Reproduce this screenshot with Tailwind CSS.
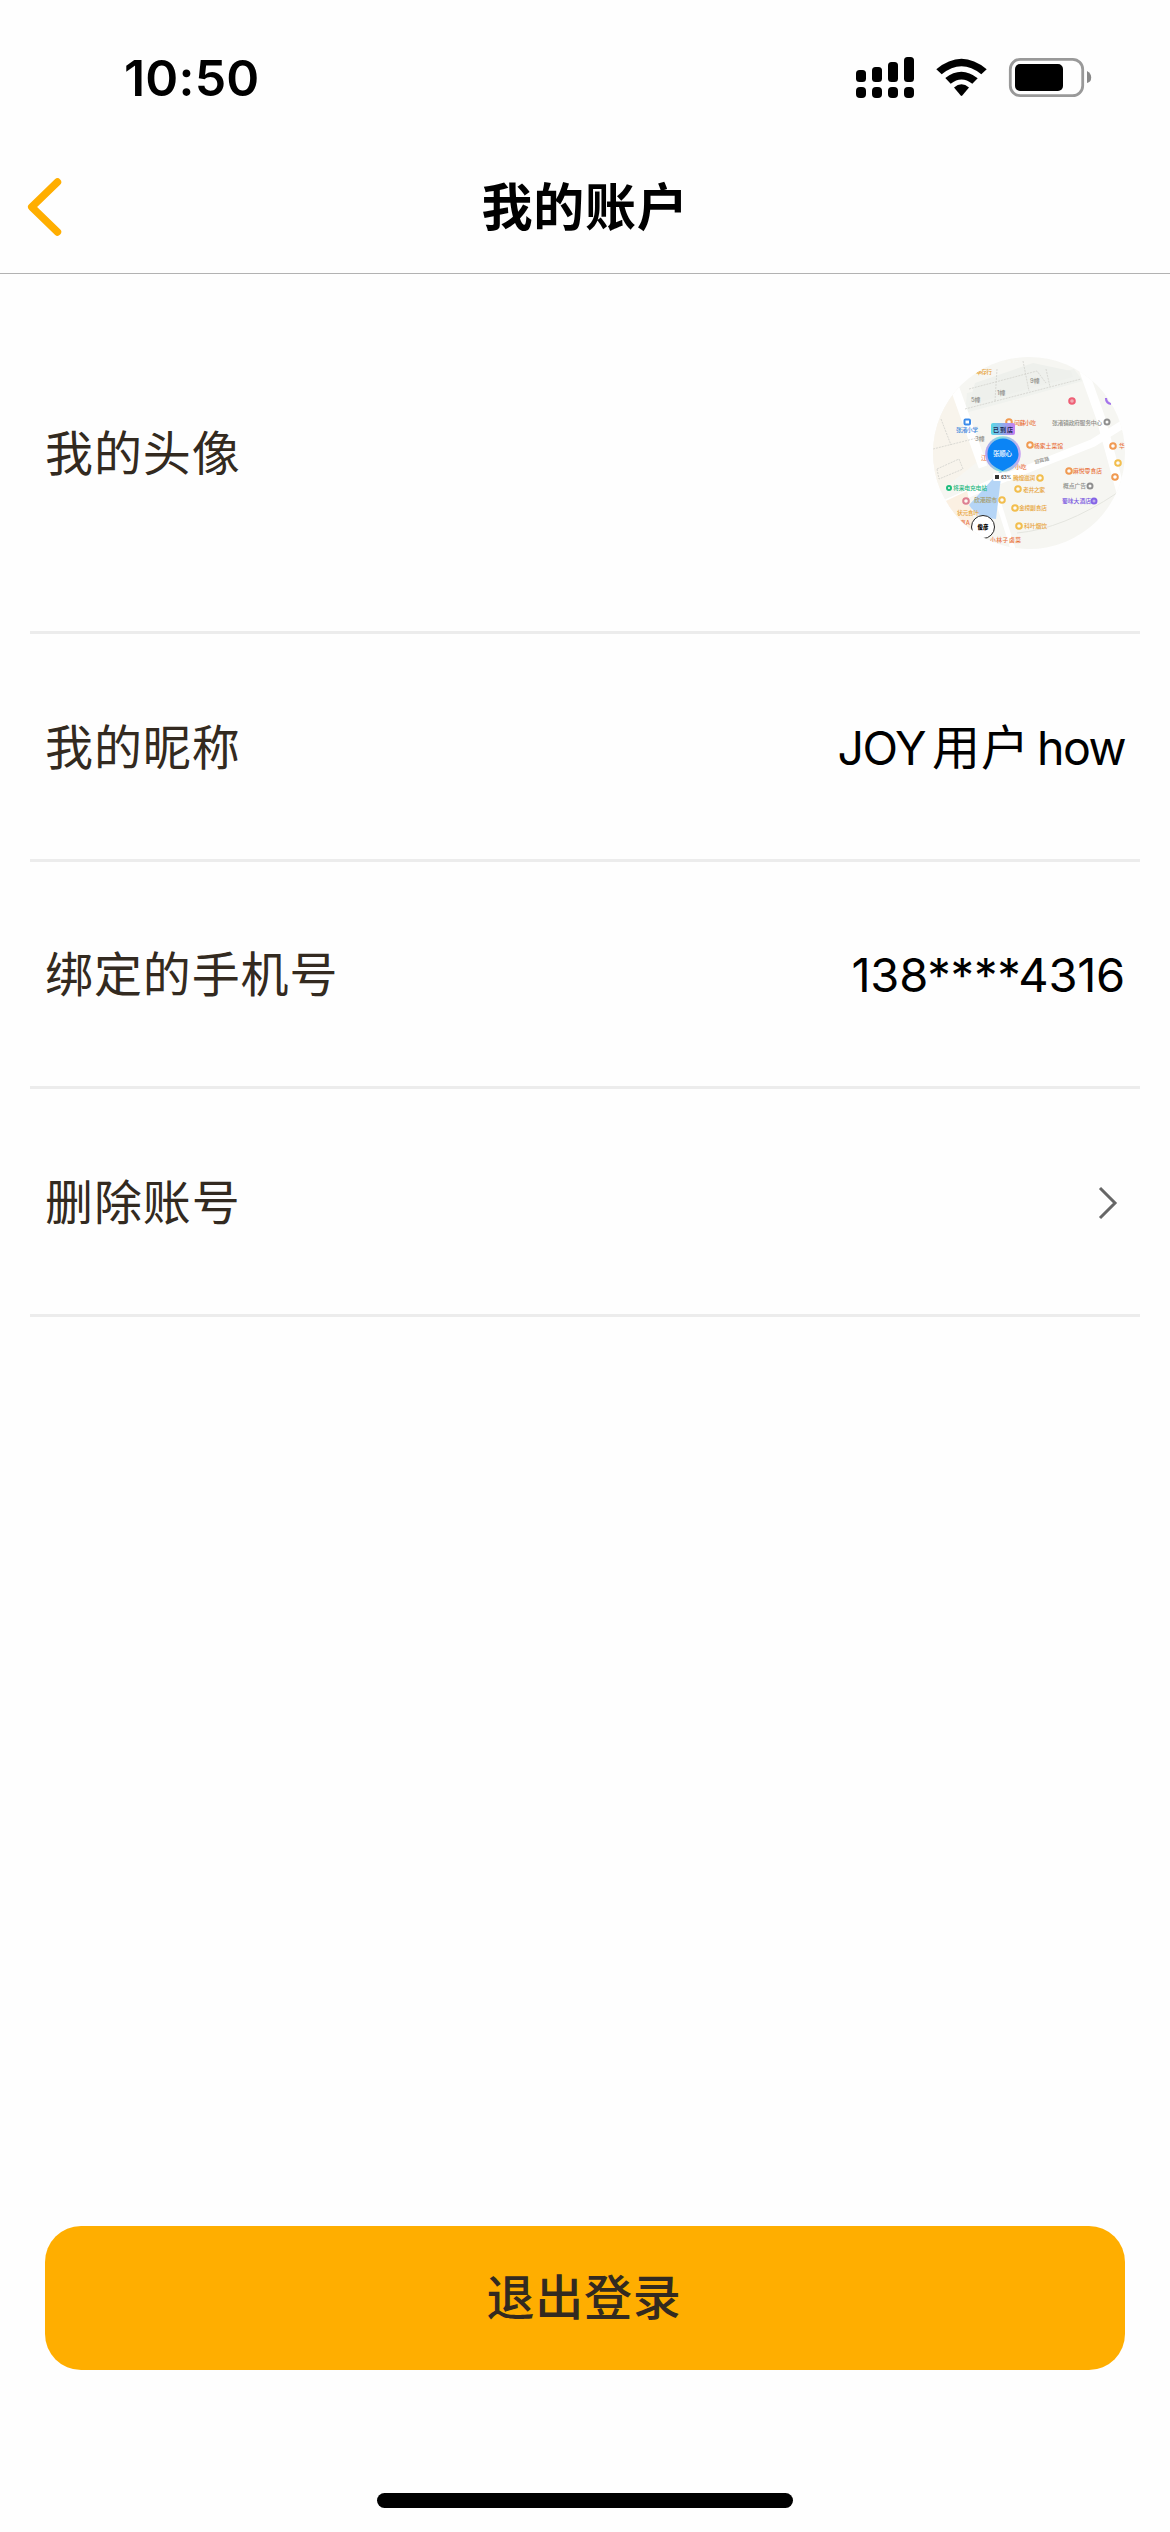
<!DOCTYPE html>
<html lang="zh-CN">
<head>
<meta charset="utf-8">
<title>我的账户</title>
<script src="https://cdn.jsdelivr.net/npm/@tailwindcss/browser@4"></script>
</head>
<body class="bg-white">
<div class="flex h-[2532px] w-[1170px] flex-col overflow-hidden bg-[#fefefe] font-['Inter','Noto_Sans_CJK_SC',sans-serif] text-black">
  <!-- Status bar -->
  <div class="flex h-[140px] items-start justify-between pl-[124px] pr-[78px]">
    <div class="pt-[48px] text-[50px] leading-[60px] font-semibold tracking-[0.2px]">10:50</div>
    <svg class="mt-[50px] h-[54px] w-[240px]" viewBox="852 50 240 54">
      <g>
        <rect x="856" y="70" width="10" height="12" rx="3.5"/><rect x="872" y="67" width="10" height="15" rx="3.5"/><rect x="888" y="62" width="10" height="20" rx="3.5"/><rect x="904" y="57" width="10" height="25" rx="3.5"/>
        <rect x="856" y="87" width="10" height="11" rx="4"/><rect x="872" y="87" width="10" height="11" rx="4"/><rect x="888" y="87" width="10" height="11" rx="4"/><rect x="904" y="87" width="10" height="11" rx="4"/>
      </g>
      <path d="M936.3 69.2Q961.5 48.2 986.7 69.2L981.3 74.2Q961.5 58.2 941.7 74.2Z"/>
      <path d="M945.3 78Q961.5 65.2 977.7 78.2L972.3 83.8Q961.5 75 950.7 83.8Z"/>
      <path d="M954 87.6Q961.5 81 969 87.6L962.3 95.6Q961.5 96.4 960.7 95.6Z"/>
      <rect x="1010.3" y="59.3" width="72.4" height="36.4" rx="10" fill="none" stroke="#999" stroke-width="2.8"/>
      <rect x="1015" y="64" width="48" height="27" rx="5"/>
      <path d="M1087 71Q1091.200 73 1091.200 77.500T1087 83Z" fill="#888"/>
    </svg>
  </div>
  <!-- Navigation bar -->
  <header class="grid h-[134px] grid-cols-3 items-center border-b border-[#b2b2b2]">
    <svg class="ml-[24px] h-[64px] w-[40px]" viewBox="24 174.500 40 64" fill="none" stroke="#ffae00" stroke-width="7.400" stroke-linecap="round" stroke-linejoin="round"><path d="M57.500 181.500L31.700 206.500L57.500 231.500"/></svg>
    <h1 class="pt-[2px] text-center text-[51px] leading-[72px] font-semibold tracking-[0.7px]">我的账户</h1>
  </header>
  <!-- Account rows -->
  <main class="mx-[30px] text-[48px] leading-[72px]">
    <div class="flex h-[360px] items-center justify-between border-b-3 border-[#ececec] px-[15px]">
      <span class="pt-[2px] tracking-[0.900px] text-[#332a20]">我的头像</span>
      <svg class="size-[192px] rounded-full" viewBox="0 0 192 192" font-size="5.800" font-weight="500">
        <rect width="192" height="192" fill="#f6f6f2"/>
        <path d="M0 68L24 28L48 102L0 140Z" fill="#f8f4ec"/>
        <path d="M34 36L141 12L150 24L32 56Z" fill="#f0f2ee"/>
        <path d="M42 26L100 6L138 14L140 20L36 48Z" fill="#eef0ec"/>
        <path d="M20 26L50 110" stroke="#fff" stroke-width="9" fill="none"/>
        <path d="M0 152L64 124L160 86L192 66" stroke="#fff" stroke-width="8" fill="none"/>
        <path d="M146 0L168 62L192 150" stroke="#fff" stroke-width="9" fill="none"/>
        <path d="M60 128L80 192" stroke="#fff" stroke-width="5" fill="none"/>
        <path d="M32 52L148 22M36 32L104 14L113 26M64 12L62 44M90 4L96 34M113 12L117 30M0 92L48 80M8 62L18 88M4 112L26 102L30 112L6 122Z" stroke="#d2d2cd" stroke-width=".8" stroke-dasharray="2 1" fill="none"/>
        <path d="M84 176Q130 172 184 136" stroke="#e4e5df" stroke-width="1" fill="none"/>
        <path d="M0 150L34 134L48 192H0Z" fill="#fbf0e2"/>
        <path d="M69 112L36 148Q45 162 63 162Z" fill="#b5d5f6"/>
        <g fill="#8d8d88"><text x="38" y="45">5幢</text><text x="64" y="38">1幢</text><text x="97" y="26">9幢</text><text x="42" y="84">3幢</text>
        <text x="119" y="68" textLength="50">张渚镇政府服务中心</text><text x="130" y="131" textLength="23">概点广告</text><text x="102" y="107" font-size="5" transform="rotate(-15 102 107)">迎宾路</text></g>
        <g fill="#e8a53c"><text x="43" y="17" textLength="16">幸存行</text><text x="80" y="123" textLength="22">腾煌滋润</text><text x="90" y="135" textLength="22">老井之家</text><text x="86" y="153" textLength="28">金榜副食店</text><text x="91" y="171" textLength="23">科叶烟饮</text><text x="24" y="158" textLength="22">状元食叶</text></g>
        <g fill="#e9743f"><text x="81" y="68" textLength="22">闫蘇小吃</text><text x="101" y="91" textLength="29">杨家土菜馆</text><text x="140" y="116" textLength="29">麻悦零食店</text><text x="57" y="185" textLength="31">小林子卤菜</text><text x="27" y="168">真A</text><text x="186" y="91">华</text><text x="48" y="103">江</text><text x="82" y="112">小吃</text></g>
        <text x="23" y="75" textLength="22" fill="#3f86dc">张渚小学</text>
        <text x="20" y="133" textLength="34" fill="#25b880">将来电充电站</text>
        <text x="129" y="146" textLength="29" fill="#7b5be0">蜀味大酒店</text>
        <text x="41" y="145" textLength="23" fill="#a69a67">欣港超市</text>
        <g fill="#fff" fill-opacity=".5" stroke-width="2">
          <g stroke="#f09a52"><circle cx="76" cy="65" r="2.800"/><circle cx="97" cy="88" r="2.800"/><circle cx="180" cy="89" r="2.800"/><circle cx="136" cy="114" r="2.800"/><circle cx="182" cy="120" r="2.800"/></g>
          <g stroke="#f2be4e"><circle cx="185" cy="106" r="2.800"/><circle cx="107" cy="121" r="2.800"/><circle cx="85" cy="132" r="2.800"/><circle cx="69" cy="143" r="2.800"/><circle cx="82" cy="151" r="2.800"/><circle cx="86" cy="169" r="2.800"/></g>
          <g stroke="#8f8f8f"><circle cx="174" cy="65" r="2.500"/><circle cx="157" cy="129" r="2.500"/></g>
          <circle cx="139" cy="44" r="2.800" fill="#ee6076" stroke="#ee6076"/><circle cx="33" cy="144" r="2.800" stroke="#dd7f91"/><circle cx="161" cy="144" r="2.500" fill="#8463e6" stroke="#8463e6"/><circle cx="16" cy="131" r="2" stroke="#1fbc7c"/>
          <rect x="31.500" y="62.500" width="5.500" height="5" rx="1" stroke="#3c8bea"/>
        </g>
        <path d="M173 41Q173 46 178 47" stroke="#a474ea" stroke-width="2.200" fill="none"/>
        <defs><linearGradient id="halo"><stop offset="0" stop-color="#b79cf0"/><stop offset=".4" stop-color="#7ee3dc"/><stop offset="1" stop-color="#c9a3f2"/></linearGradient><linearGradient id="tag"><stop offset="0" stop-color="#58dbe6"/><stop offset="1" stop-color="#c77df0"/></linearGradient></defs>
        <circle cx="70" cy="97" r="17.800" fill="url(#halo)"/>
        <path d="M54.500 97A15.500 15.500 0 1 1 85.500 97C85.500 106 78 110 69.500 114C61 110 54.500 106 54.500 97Z" fill="#0b84f5"/>
        <text x="60" y="99" textLength="19" font-size="6.500" fill="#fff">张顺心</text>
        <rect x="58" y="66" width="24" height="12" rx="2" fill="url(#tag)"/>
        <text x="60" y="74.500" textLength="20" font-size="6" fill="#222a55" font-weight="700">已到店</text>
        <rect x="60" y="116" width="18" height="8" rx="1.500" fill="#fff"/><rect x="62" y="118" width="4" height="4" fill="#333"/><text x="68" y="122" font-size="4.500" fill="#222">63%</text>
        <circle cx="50" cy="170" r="11.500" fill="#fff" stroke="#222" stroke-width="1"/><text x="44.500" y="172" textLength="11" font-size="5.500" fill="#000" font-weight="900">俊彦</text>
      </svg>
    </div>
    <div class="flex h-[228px] items-center justify-between border-b-3 border-[#ececec] px-[15px]">
      <span class="pt-[2px] tracking-[0.900px] text-[#332a20]">我的昵称</span>
      <span class="flex items-baseline gap-[7px] pt-[2px] text-[46.500px] tracking-[-1.500px]"><span>JOY</span><span class="text-[48px] tracking-[0.900px]">用户</span><span>how</span></span>
    </div>
    <div class="flex h-[227px] items-center justify-between border-b-3 border-[#ececec] px-[15px]">
      <span class="pt-[2px] tracking-[0.900px] text-[#332a20]">绑定的手机号</span>
      <span class="pt-[2px] text-[47px] tracking-[-0.250px]">138****4316</span>
    </div>
    <div class="flex h-[228px] items-center justify-between border-b-3 border-[#ececec] px-[15px]">
      <span class="pt-[2px] tracking-[0.900px] text-[#332a20]">删除账号</span>
      <svg class="mt-[2px] mr-[7px] h-[40px] w-[24px]" viewBox="0 0 24 40" fill="none" stroke="#666" stroke-width="3"><path d="M6 5L21 20L6 35"/></svg>
    </div>
  </main>
  <!-- Footer -->
  <footer class="mt-auto flex flex-col items-center px-[45px] pb-[24px]">
    <button class="h-[144px] w-full rounded-[36px] bg-[#ffae00] pr-[2px] text-[48px] leading-[72px] font-medium tracking-[0.700px] text-[#332a20]">退出登录</button>
    <div class="mt-[123px] h-[15px] w-[416px] rounded-full bg-black"></div>
  </footer>
</div>
</body>
</html>
